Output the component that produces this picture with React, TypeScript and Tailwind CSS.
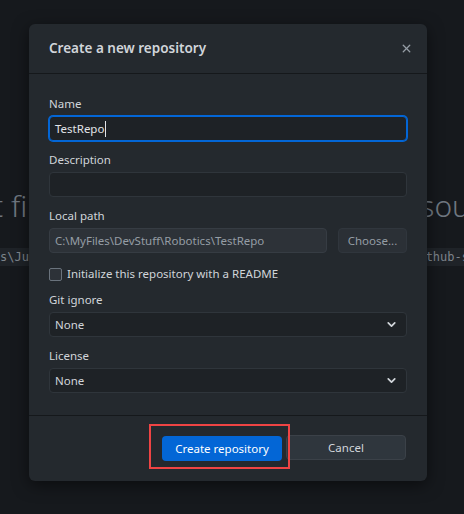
import React from "react";
import { X, ChevronDown } from "lucide-react";

const Label = ({ children }: { children: React.ReactNode }) => (
  <div className="text-[11.5px] leading-4 text-[#d1d5da]">{children}</div>
);

const Select = () => (
  <div className="mt-1 flex h-[25px] items-center justify-between rounded-[4px] border border-[#2f353b] bg-[#1e2226] pl-[5px] pr-[8px] text-[11.5px] text-[#d1d5da]">
    <span>None</span>
    <ChevronDown size={13} strokeWidth={3.2} className="text-[#d1d5da]" />
  </div>
);

const App = () => {
  return (
    <div
      className="relative h-[514px] w-[464px] overflow-hidden bg-[#16191d]"
      style={{ fontFamily: '"Noto Sans", "Open Sans", sans-serif' }}
    >
      {/* page behind the modal */}
      <div className="pt-[188px]">
        <div className="flex justify-between overflow-hidden whitespace-nowrap text-[30px] font-light leading-9 text-[#6f7780]">
          <span className="-ml-[7px]">t fi</span>
          <span className="-mr-[6px]">sou</span>
        </div>
        <div
          className="mt-[24px] flex justify-between overflow-hidden whitespace-nowrap text-[12px] leading-[18px] text-[#7d848c]"
          style={{ fontFamily: '"DejaVu Sans Mono", "Liberation Mono", monospace' }}
        >
          <span className="-ml-[3px] bg-[#1f2328] pl-[3px]">s\Jur</span>
          <span className="-mr-[5px] bg-[#1f2328]">thub-s</span>
        </div>
      </div>

      {/* modal */}
      <div className="absolute left-[29px] top-[24px] w-[398px] rounded-[6px] bg-[#24292e] shadow-[0_4px_16px_rgba(0,0,0,0.5)]">
        <div className="flex h-[50px] items-center justify-between border-b border-[#15181b] pl-[20px] pr-[14px]">
          <h2 className="text-[13.5px] font-semibold text-[#d1d5da]">Create a new repository</h2>
          <X size={13} strokeWidth={2.4} className="text-[#959da5]" />
        </div>

        <div className="px-[20px] pb-[22px] pt-[22px]">
          <Label>Name</Label>
          <div className="mt-1 flex h-[25px] items-center rounded-[4px] border border-[#0366d6] bg-[#1e2226] pl-[5px] text-[11.5px] text-[#e1e4e8] shadow-[0_0_0_1px_#0366d6]">
            TestRepo
            <span className="ml-px h-[16px] w-px bg-[#e1e4e8]" />
          </div>

          <div className="mt-[11px]">
            <Label>Description</Label>
            <div className="mt-1 h-[25px] rounded-[4px] border border-[#2f353b] bg-[#1e2226]" />
          </div>

          <div className="mt-[11px]">
            <Label>Local path</Label>
            <div className="mt-1 flex gap-[11px]">
              <div className="flex h-[25px] flex-1 items-center rounded-[4px] border border-[#363c43] bg-[#2d3238] pl-[5px] text-[11.5px] text-[#959da5]">
                C:\MyFiles\DevStuff\Robotics\TestRepo
              </div>
              <button className="h-[25px] w-[69px] rounded-[4px] border border-[#30363d] bg-[#2b3036] text-[11.5px] text-[#959da5]">
                Choose...
              </button>
            </div>
          </div>

          <div className="mt-[13px] flex items-center gap-[5px]">
            <span className="h-[13px] w-[13px] rounded-[2px] border border-[#6a737d] bg-[#2d3238]" />
            <span className="text-[11.5px] leading-4 text-[#d1d5da]">Initialize this repository with a README</span>
          </div>

          <div className="mt-[10px]">
            <Label>Git ignore</Label>
            <Select />
          </div>

          <div className="mt-[11px]">
            <Label>License</Label>
            <Select />
          </div>
        </div>

        <div className="flex justify-end gap-1 border-t border-[#15181b] px-[21px] pb-[20px] pt-[19px]">
          <div className="relative">
            <button className="h-[25px] w-[120px] rounded-[4px] bg-[#0366d6] text-[11.5px] text-white">
              Create repository
            </button>
            <span className="absolute -bottom-[8px] -left-[13px] -right-[8px] -top-[11px] border-2 border-[#ef4444]" />
          </div>
          <button className="h-[25px] w-[120px] rounded-[4px] border border-[#3b4148] bg-[#2f363d] text-[11.5px] text-[#d1d5da]">
            Cancel
          </button>
        </div>
      </div>
    </div>
  );
};

export default App;
